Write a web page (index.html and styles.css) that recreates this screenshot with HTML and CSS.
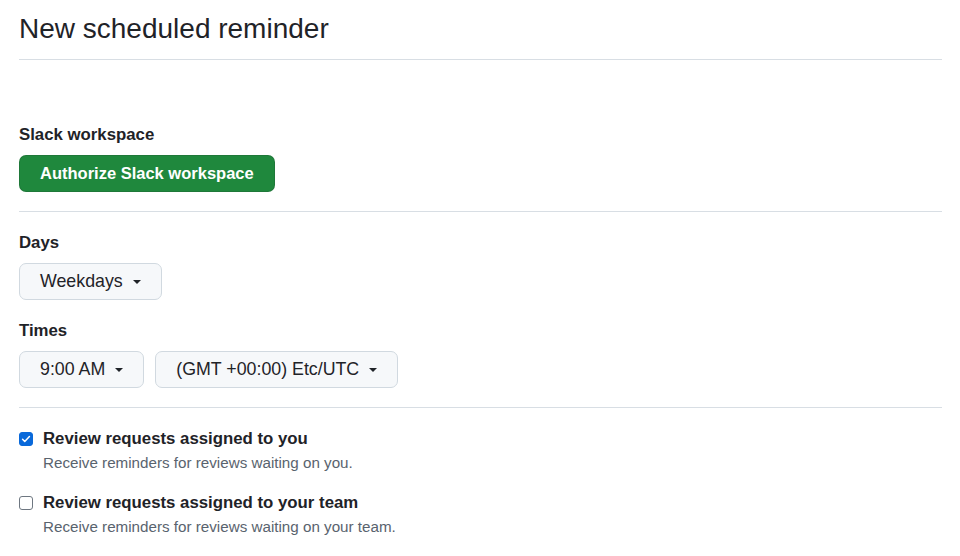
FILE: index.html
```html
<!DOCTYPE html>
<html>
<head>
<meta charset="utf-8">
<link rel="stylesheet" href="styles.css">
</head>
<body>
<div class="page">
  <div class="subhead">
    <h1 class="subhead-title">New scheduled reminder</h1>
  </div>

  <section class="group first">
    <div class="label">Slack workspace</div>
    <button class="btn-primary">Authorize Slack workspace</button>
  </section>

  <section class="group bordered">
    <div class="label">Days</div>
    <div class="row">
      <button class="btn">Weekdays <span class="caret"></span></button>
    </div>
    <div class="label second">Times</div>
    <div class="row">
      <button class="btn">9:00 AM <span class="caret"></span></button>
      <button class="btn">(GMT +00:00) Etc/UTC <span class="caret"></span></button>
    </div>
  </section>

  <section class="group bordered checks">
    <div class="check">
      <span class="box checked">
        <svg viewBox="0 0 16 16" width="10" height="10"><path d="M2.5 8.5l3.5 3.5 7.5-8" fill="none" stroke="#fff" stroke-width="2.4" stroke-linecap="round" stroke-linejoin="round"/></svg>
      </span>
      <div>
        <div class="check-label">Review requests assigned to you</div>
        <div class="note">Receive reminders for reviews waiting on you.</div>
      </div>
    </div>
    <div class="check">
      <span class="box"></span>
      <div>
        <div class="check-label">Review requests assigned to your team</div>
        <div class="note">Receive reminders for reviews waiting on your team.</div>
      </div>
    </div>
  </section>
</div>
</body>
</html>
```

FILE: styles.css
```css
* { box-sizing: border-box; }
html, body { margin: 0; background: #fff; }
body {
  font-family: "Liberation Sans", Arial, sans-serif;
  color: #1f2328;
  font-size: 17.5px;
}
.page {
  width: 923px;
  margin-left: 19px;
}
.subhead {
  border-bottom: 1px solid #d8dee4;
  padding-top: 10px;
  padding-bottom: 12px;
}
.subhead-title {
  margin: 0;
  font-size: 28px;
  font-weight: 400;
  line-height: 37px;
}
.group.first {
  padding-top: 64px;
  padding-bottom: 19px;
}
.label {
  font-weight: 700;
  font-size: 16.8px;
  line-height: 22px;
  margin-bottom: 9px;
}
.label.second { margin-top: 20px; }
.btn-primary {
  display: block;
  font-family: inherit;
  font-size: 16.5px;
  font-weight: 700;
  color: #fff;
  background: #1f883d;
  border: 1px solid rgba(31,35,40,0.15);
  border-radius: 7px;
  height: 37px;
  padding: 0 20px;
}
.bordered {
  border-top: 1px solid #d8dee4;
}
.group.bordered { padding-top: 20px; padding-bottom: 19px; }
.row { display: flex; gap: 11px; }
.btn {
  display: inline-flex;
  align-items: center;
  gap: 10px;
  font-family: inherit;
  font-size: 17.8px;
  font-weight: 500;
  color: #1f2328;
  background: #f6f8fa;
  border: 1px solid #d1d9e0;
  border-radius: 7px;
  height: 37px;
  padding: 0 20px;
}
.caret {
  width: 0; height: 0;
  border-left: 4.5px solid transparent;
  border-right: 4.5px solid transparent;
  border-top: 4.5px solid #1f2328;
  margin-top: 1px;
}
.group.checks { padding-top: 20px; }
.check { display: flex; gap: 10px; margin-bottom: 18px; }
.box {
  flex: none;
  width: 14px; height: 14px;
  margin-top: 4px;
  border: 1px solid #6e7781;
  border-radius: 3px;
  background: #fff;
  display: flex; align-items: center; justify-content: center;
}
.box.checked { background: #0969da; border-color: #0969da; }
.check-label { font-weight: 700; font-size: 16.8px; line-height: 22px; }
.note { font-size: 15.2px; color: #59636e; line-height: 22px; margin-top: 2px; }
```
